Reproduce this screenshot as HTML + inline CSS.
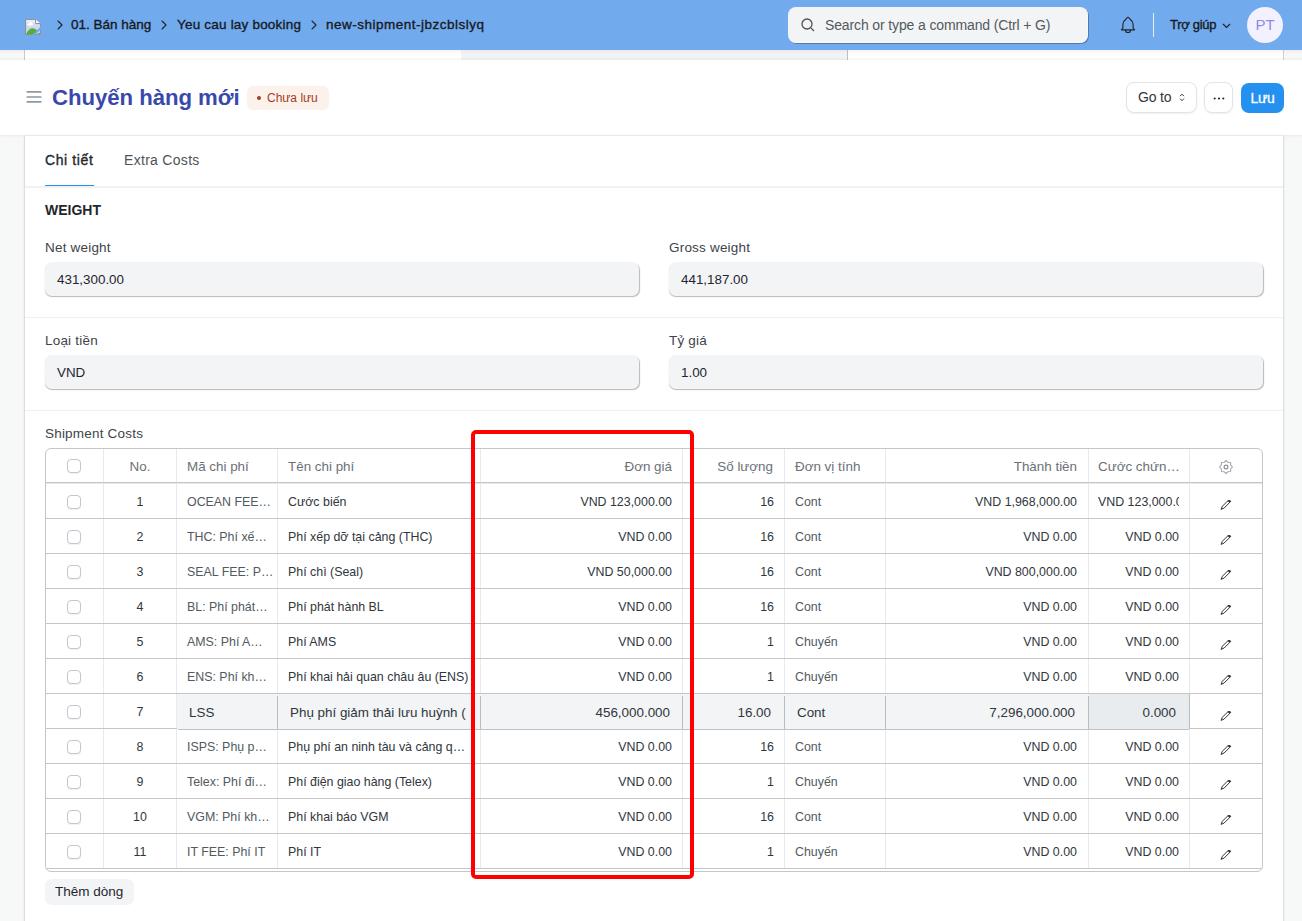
<!DOCTYPE html>
<html><head><meta charset="utf-8">
<style>
*{box-sizing:border-box;margin:0;padding:0}
html,body{width:1302px;height:921px;overflow:hidden}
body{font-family:"Liberation Sans",sans-serif;background:#f7f8f8;position:relative;color:#1f272e}
.abs{position:absolute}
#nav{left:0;top:0;width:1302px;height:50px;background:#72aaee}
.crumb{position:absolute;top:16px;font-size:13.5px;color:#171a1d;white-space:nowrap;line-height:18px;-webkit-text-stroke:.35px #171a1d}
.chev{position:absolute;top:20px}
#strip{left:0;top:50px;width:1302px;height:10px;background:#f7f8f8}
#head{left:0;top:60px;width:1302px;height:76px;background:#fff;border-bottom:1px solid #ededed;box-shadow:0 1px 2px rgba(0,0,0,.03)}
#card{left:24px;top:136px;width:1260px;height:800px;background:#fff;border-left:1px solid #dedede;border-right:1px solid #dedede;box-shadow:0 0 3px rgba(25,39,52,.06)}
.lbl{position:absolute;font-size:13px;color:#3d4449;white-space:nowrap;line-height:16px}
.inp{position:absolute;height:34px;background:#f3f4f6;border-radius:7px;box-shadow:0.5px 1px 1px rgba(0,0,0,.28);font-size:13.4px;color:#1f272e;padding-left:12px;line-height:35px}
.gt{position:absolute;font-size:12.4px;line-height:18px;white-space:nowrap}
.hr{position:absolute;left:25px;width:1258px;height:1px;background:#f0f0f0}
</style></head><body>
<div id="nav" class="abs">
  <svg class="abs" style="left:25px;top:19px" width="16" height="16" viewBox="0 0 16 16"><defs><linearGradient id="pg" x1="0" y1="0" x2="0" y2="1"><stop offset="0" stop-color="#ffffff"/><stop offset=".18" stop-color="#dde7f8"/><stop offset=".6" stop-color="#c9d7ef"/><stop offset="1" stop-color="#dae4f5"/></linearGradient></defs><path d="M.6 .6H10.6L15.4 5.2V15.4H.6z" fill="url(#pg)" stroke="#8e8c88" stroke-width="1"/><path d="M10.6 .6V4.6H15.4" fill="#fff" stroke="#8e8c88" stroke-width="1"/><ellipse cx="5.2" cy="5.4" rx="3" ry="1" fill="#fff"/><circle cx="5.6" cy="4.5" r="1.5" fill="#fff"/><path d="M1 15.2Q4 8.5 9 9.4Q11.5 10 12.6 12.4L11 15.2z" fill="#58ad38"/><path d="M13.2 14.2Q14.2 13.3 15.1 14.2V15.1H13z" fill="#58ad38"/><path d="M6.8 16.2L9.9 16.2L16.2 10.2L16.2 7.4z" fill="#72aaee"/></svg>
  <svg class="chev" style="left:57px" width="6" height="10" viewBox="0 0 6 10"><path d="M1 1l4 4-4 4" fill="none" stroke="#22282c" stroke-width="1.15" stroke-linecap="round" stroke-linejoin="round"/></svg>
  <div class="crumb" style="left:71px;letter-spacing:0px">01. Bán hàng</div>
  <svg class="chev" style="left:161px" width="6" height="10" viewBox="0 0 6 10"><path d="M1 1l4 4-4 4" fill="none" stroke="#22282c" stroke-width="1.15" stroke-linecap="round" stroke-linejoin="round"/></svg>
  <div class="crumb" style="left:177px;letter-spacing:.2px">Yeu cau lay booking</div>
  <svg class="chev" style="left:311px" width="6" height="10" viewBox="0 0 6 10"><path d="M1 1l4 4-4 4" fill="none" stroke="#22282c" stroke-width="1.15" stroke-linecap="round" stroke-linejoin="round"/></svg>
  <div class="crumb" style="left:326px;letter-spacing:.5px">new-shipment-jbzcblslyq</div>
  <div class="abs" style="left:788px;top:7px;width:300px;height:36px;background:#f3f4f6;border-radius:8px;box-shadow:inset -1px -1px 0 rgba(255,250,240,.6),1px 1px .5px rgba(30,50,90,.4)">
    <svg class="abs" style="left:13px;top:11px" width="14" height="14" viewBox="0 0 14 14"><circle cx="6" cy="6" r="5" fill="none" stroke="#4c5257" stroke-width="1.3"/><path d="M10 10l3 3" stroke="#4c5257" stroke-width="1.3"/></svg>
    <div class="abs" style="left:37px;top:10px;font-size:14px;letter-spacing:-.13px;color:#525a60;white-space:nowrap;line-height:16px">Search or type a command (Ctrl + G)</div>
  </div>
  <svg class="abs" style="left:1118px;top:14px" width="20" height="22" viewBox="0 0 20 22"><path d="M3.4 15.8L4.9 14V10.2C4.9 7.8 6.4 6.3 7.9 5.2L9 3.8C9.5 3.1 10.5 3.1 11 3.8L12.1 5.2C13.6 6.3 15.1 7.8 15.1 10.2V14L16.6 15.8Z" fill="none" stroke="#1f2529" stroke-width="1.15" stroke-linejoin="round"/><path d="M7.5 15.9A2.5 2.6 0 0 0 12.5 15.9" fill="none" stroke="#1f2529" stroke-width="1.15"/></svg>
  <div class="abs" style="left:1153px;top:13px;width:1px;height:24px;background:#e6eefa"></div>
  <div class="crumb" style="left:1170px;top:16px;font-size:13px;letter-spacing:-.3px">Trợ giúp</div>
  <svg class="abs" style="left:1222px;top:23px" width="9" height="6" viewBox="0 0 9 6"><path d="M1 1l3.5 3.5L8 1" fill="none" stroke="#1c2329" stroke-width="1.2"/></svg>
  <div class="abs" style="left:1247px;top:7px;width:36px;height:36px;border-radius:50%;background:#f2f1fd;color:#8d8be5;font-size:15px;text-align:center;line-height:36px">PT</div>
</div>
<div id="strip" class="abs">
  <div class="abs" style="left:24px;top:0;width:1260px;height:10px;background:#fff;border-left:1px solid #c9c9c9;border-right:1px solid #d0d0d0"></div>
  <div class="abs" style="left:461px;top:0;width:387px;height:10px;background:#f2f3f4;border-right:1px solid #c0c0c0"></div>
  <div class="abs" style="left:0;top:0;width:1302px;height:10px;background:linear-gradient(rgba(0,0,0,.04),rgba(0,0,0,0) 40%,rgba(0,0,0,0) 70%,rgba(0,0,0,.04))"></div>
</div>
<div id="head" class="abs">
  <svg class="abs" style="left:25px;top:29px" width="18" height="16" viewBox="0 0 18 16"><path d="M2.3 2.9h13.5M2.3 8h13.5M2.3 12.9h13.5" stroke="#8f99a2" stroke-width="1.7" stroke-linecap="round"/></svg>
  <div class="abs" style="left:52px;top:25px;font-size:22.2px;letter-spacing:-.05px;font-weight:bold;color:#3949ab;white-space:nowrap;line-height:26px">Chuyến hàng mới</div>
  <div class="abs" style="left:247px;top:26px;width:82px;height:24px;border-radius:6px;background:#fdf1ec;color:#a1401b;font-size:12px;line-height:24px;padding-left:10px;white-space:nowrap"><span style="display:inline-block;width:4px;height:4px;border-radius:50%;background:#a1401b;vertical-align:middle;margin-right:6px;position:relative;top:-1px"></span>Chưa lưu</div>
  <div class="abs" style="left:1126px;top:22px;width:71px;height:31px;border-radius:8px;background:#fff;border:1px solid #e4e4e4;box-shadow:0 1px 2px rgba(0,0,0,.06);font-size:14px;color:#30373c;line-height:29px;padding-left:11px;letter-spacing:-.2px">Go to<svg class="abs" style="left:52px;top:9px" width="6" height="11" viewBox="0 0 6 11"><path d="M1.3 3.9l1.7-1.7 1.7 1.7M1.3 6.9l1.7 1.7 1.7-1.7" fill="none" stroke="#30373c" stroke-width="1" stroke-linecap="round" stroke-linejoin="round"/></svg></div>
  <div class="abs" style="left:1204px;top:22px;width:29px;height:31px;border-radius:8px;background:#fff;border:1px solid #e4e4e4;box-shadow:0 1px 2px rgba(0,0,0,.06)"><svg class="abs" style="left:8px;top:14px" width="12" height="3" viewBox="0 0 12 3"><circle cx="1.7" cy="1.5" r="1.05" fill="#1f272e"/><circle cx="6" cy="1.5" r="1.05" fill="#1f272e"/><circle cx="10.3" cy="1.5" r="1.05" fill="#1f272e"/></svg></div>
  <div class="abs" style="left:1241px;top:23px;width:43px;height:30px;border-radius:8px;background:#2490ef;color:#fff;font-size:14px;-webkit-text-stroke:.3px #fff;line-height:30px;text-align:center;letter-spacing:-.3px">Lưu</div>
</div>
<div id="card" class="abs"></div>
<div class="abs" style="left:45px;top:151px;font-size:14px;-webkit-text-stroke:.35px #1f272e;letter-spacing:.6px;color:#1f272e;white-space:nowrap;line-height:18px">Chi tiết</div>
<div class="abs" style="left:124px;top:151px;font-size:14px;letter-spacing:.3px;color:#4d5459;white-space:nowrap;line-height:18px">Extra Costs</div>
<div class="abs" style="left:45px;top:185px;width:49px;height:1px;background:#2490ef"></div>
<div class="hr" style="top:186px;height:2px;background:#f1f1f1"></div>
<div class="abs" style="left:45px;top:202px;font-size:14px;font-weight:bold;color:#1f272e;white-space:nowrap;line-height:16px">WEIGHT</div>
<div class="lbl" style="left:45px;top:240px;font-size:13.5px;letter-spacing:.2px">Net weight</div>
<div class="inp" style="left:45px;top:262px;width:594px">431,300.00</div>
<div class="lbl" style="left:669px;top:240px;font-size:13.5px;letter-spacing:.2px">Gross weight</div>
<div class="inp" style="left:669px;top:262px;width:594px">441,187.00</div>
<div class="hr" style="top:317px"></div>
<div class="lbl" style="left:45px;top:333px;font-size:13.5px;letter-spacing:.2px">Loại tiền</div>
<div class="inp" style="left:45px;top:355px;width:594px">VND</div>
<div class="lbl" style="left:669px;top:333px;font-size:13.5px;letter-spacing:.2px">Tỷ giá</div>
<div class="inp" style="left:669px;top:355px;width:594px">1.00</div>
<div class="hr" style="top:410px"></div>
<div class="lbl" style="left:45px;top:426px;font-size:13.5px;letter-spacing:.2px">Shipment Costs</div>
<!--GRID-->
<div class="abs" style="left:45px;top:448px;width:1218px;height:424px;border:1px solid #c6c6c6;border-radius:6px;background:#fff"></div>
<div class="abs" style="left:103px;top:449px;width:1px;height:420px;background:#e8ebee"></div>
<div class="abs" style="left:176px;top:449px;width:1px;height:420px;background:#e8ebee"></div>
<div class="abs" style="left:277px;top:449px;width:1px;height:420px;background:#e8ebee"></div>
<div class="abs" style="left:480px;top:449px;width:1px;height:420px;background:#e8ebee"></div>
<div class="abs" style="left:682px;top:449px;width:1px;height:420px;background:#e8ebee"></div>
<div class="abs" style="left:784px;top:449px;width:1px;height:420px;background:#e8ebee"></div>
<div class="abs" style="left:885px;top:449px;width:1px;height:420px;background:#e8ebee"></div>
<div class="abs" style="left:1088px;top:449px;width:1px;height:420px;background:#e8ebee"></div>
<div class="abs" style="left:1189px;top:449px;width:1px;height:420px;background:#e8ebee"></div>
<div class="abs" style="left:46px;top:482px;width:1216px;height:1px;background:#c6c6c6"></div>
<div class="abs" style="left:46px;top:483px;width:1216px;height:1px;background:#e5e9ec"></div>
<div class="abs" style="left:46px;top:518px;width:1216px;height:1px;background:#c6c6c6"></div>
<div class="abs" style="left:46px;top:553px;width:1216px;height:1px;background:#c6c6c6"></div>
<div class="abs" style="left:46px;top:588px;width:1216px;height:1px;background:#c6c6c6"></div>
<div class="abs" style="left:46px;top:623px;width:1216px;height:1px;background:#c6c6c6"></div>
<div class="abs" style="left:46px;top:658px;width:1216px;height:1px;background:#c6c6c6"></div>
<div class="abs" style="left:46px;top:693px;width:1216px;height:1px;background:#c6c6c6"></div>
<div class="abs" style="left:46px;top:728px;width:1216px;height:1px;background:#c6c6c6"></div>
<div class="abs" style="left:46px;top:763px;width:1216px;height:1px;background:#c6c6c6"></div>
<div class="abs" style="left:46px;top:798px;width:1216px;height:1px;background:#c6c6c6"></div>
<div class="abs" style="left:46px;top:833px;width:1216px;height:1px;background:#c6c6c6"></div>
<div class="abs" style="left:46px;top:868px;width:1216px;height:1px;background:#c6c6c6"></div>
<div class="abs" style="left:67px;top:459px;width:14px;height:14px;border:1px solid #c2c8cd;border-radius:4px;background:#fff;box-shadow:0 1px 1px rgba(0,0,0,.06)"></div>
<div class="gt" style="left:104px;top:458px;width:72px;text-align:center;color:#6b7177;font-size:13.4px;">No.</div>
<div class="gt" style="left:187px;top:458px;color:#6b7177;font-size:13.4px;">Mã chi phí</div>
<div class="gt" style="left:288px;top:458px;color:#6b7177;font-size:13.4px;">Tên chi phí</div>
<div class="gt" style="left:492px;top:458px;width:180px;text-align:right;color:#6b7177;font-size:13.4px;">Đơn giá</div>
<div class="gt" style="left:693px;top:458px;width:80px;text-align:right;color:#6b7177;font-size:13.4px;">Số lượng</div>
<div class="gt" style="left:795px;top:458px;color:#6b7177;font-size:13.4px;">Đơn vị tính</div>
<div class="gt" style="left:897px;top:458px;width:180px;text-align:right;color:#6b7177;font-size:13.4px;">Thành tiền</div>
<div class="gt" style="left:1098px;top:458px;color:#6b7177;font-size:13.4px;">Cước chứn…</div>
<svg class="abs" style="left:1219px;top:460px" width="14" height="14" viewBox="0 0 14 14"><path d="M7.00 0.50 L8.95 2.29 L11.60 2.40 L11.71 5.05 L13.50 7.00 L11.71 8.95 L11.60 11.60 L8.95 11.71 L7.00 13.50 L5.05 11.71 L2.40 11.60 L2.29 8.95 L0.50 7.00 L2.29 5.05 L2.40 2.40 L5.05 2.29Z" fill="none" stroke="#a0a6ac" stroke-width="1.05" stroke-linejoin="round"/><circle cx="7" cy="7" r="1.9" fill="none" stroke="#8d939a" stroke-width="1.2"/></svg>
<div class="abs" style="left:67px;top:495px;width:14px;height:14px;border:1px solid #c2c8cd;border-radius:4px;background:#fff;box-shadow:0 1px 1px rgba(0,0,0,.06)"></div>
<div class="gt" style="left:104px;top:493px;width:72px;text-align:center;color:#30363c;">1</div>
<div class="gt" style="left:187px;top:493px;color:#525a60;">OCEAN FEE…</div>
<div class="gt" style="left:288px;top:493px;color:#30363c;">Cước biến</div>
<div class="gt" style="left:492px;top:493px;width:180px;text-align:right;color:#30363c;">VND 123,000.00</div>
<div class="gt" style="left:694px;top:493px;width:80px;text-align:right;color:#30363c;">16</div>
<div class="gt" style="left:795px;top:493px;color:#525a60;">Cont</div>
<div class="gt" style="left:897px;top:493px;width:180px;text-align:right;color:#30363c;">VND 1,968,000.00</div>
<div class="abs" style="left:1098px;top:493px;width:81px;height:18px;overflow:hidden"><div class="gt" style="left:0;top:0;color:#30363c">VND 123,000.00</div></div>
<svg class="abs" style="left:1220px;top:500px" width="12" height="12" viewBox="0 1 12 12"><path d="M1.00 10.40 L2.38 7.25 L9.03 0.61 L10.79 2.37 L4.15 9.02Z" fill="none" stroke="#2e3439" stroke-width="1" stroke-linejoin="round"/><path d="M7.61 2.02 L9.03 0.61 L10.79 2.37 L9.38 3.79Z" fill="#2e3439"/></svg>
<div class="abs" style="left:67px;top:530px;width:14px;height:14px;border:1px solid #c2c8cd;border-radius:4px;background:#fff;box-shadow:0 1px 1px rgba(0,0,0,.06)"></div>
<div class="gt" style="left:104px;top:528px;width:72px;text-align:center;color:#30363c;">2</div>
<div class="gt" style="left:187px;top:528px;color:#525a60;">THC: Phí xế…</div>
<div class="gt" style="left:288px;top:528px;color:#30363c;">Phí xếp dỡ tại cảng (THC)</div>
<div class="gt" style="left:492px;top:528px;width:180px;text-align:right;color:#30363c;">VND 0.00</div>
<div class="gt" style="left:694px;top:528px;width:80px;text-align:right;color:#30363c;">16</div>
<div class="gt" style="left:795px;top:528px;color:#525a60;">Cont</div>
<div class="gt" style="left:897px;top:528px;width:180px;text-align:right;color:#30363c;">VND 0.00</div>
<div class="gt" style="left:1099px;top:528px;width:80px;text-align:right;color:#30363c;">VND 0.00</div>
<svg class="abs" style="left:1220px;top:535px" width="12" height="12" viewBox="0 1 12 12"><path d="M1.00 10.40 L2.38 7.25 L9.03 0.61 L10.79 2.37 L4.15 9.02Z" fill="none" stroke="#2e3439" stroke-width="1" stroke-linejoin="round"/><path d="M7.61 2.02 L9.03 0.61 L10.79 2.37 L9.38 3.79Z" fill="#2e3439"/></svg>
<div class="abs" style="left:67px;top:565px;width:14px;height:14px;border:1px solid #c2c8cd;border-radius:4px;background:#fff;box-shadow:0 1px 1px rgba(0,0,0,.06)"></div>
<div class="gt" style="left:104px;top:563px;width:72px;text-align:center;color:#30363c;">3</div>
<div class="gt" style="left:187px;top:563px;color:#525a60;">SEAL FEE: P…</div>
<div class="gt" style="left:288px;top:563px;color:#30363c;">Phí chì (Seal)</div>
<div class="gt" style="left:492px;top:563px;width:180px;text-align:right;color:#30363c;">VND 50,000.00</div>
<div class="gt" style="left:694px;top:563px;width:80px;text-align:right;color:#30363c;">16</div>
<div class="gt" style="left:795px;top:563px;color:#525a60;">Cont</div>
<div class="gt" style="left:897px;top:563px;width:180px;text-align:right;color:#30363c;">VND 800,000.00</div>
<div class="gt" style="left:1099px;top:563px;width:80px;text-align:right;color:#30363c;">VND 0.00</div>
<svg class="abs" style="left:1220px;top:570px" width="12" height="12" viewBox="0 1 12 12"><path d="M1.00 10.40 L2.38 7.25 L9.03 0.61 L10.79 2.37 L4.15 9.02Z" fill="none" stroke="#2e3439" stroke-width="1" stroke-linejoin="round"/><path d="M7.61 2.02 L9.03 0.61 L10.79 2.37 L9.38 3.79Z" fill="#2e3439"/></svg>
<div class="abs" style="left:67px;top:600px;width:14px;height:14px;border:1px solid #c2c8cd;border-radius:4px;background:#fff;box-shadow:0 1px 1px rgba(0,0,0,.06)"></div>
<div class="gt" style="left:104px;top:598px;width:72px;text-align:center;color:#30363c;">4</div>
<div class="gt" style="left:187px;top:598px;color:#525a60;">BL: Phí phát…</div>
<div class="gt" style="left:288px;top:598px;color:#30363c;">Phí phát hành BL</div>
<div class="gt" style="left:492px;top:598px;width:180px;text-align:right;color:#30363c;">VND 0.00</div>
<div class="gt" style="left:694px;top:598px;width:80px;text-align:right;color:#30363c;">16</div>
<div class="gt" style="left:795px;top:598px;color:#525a60;">Cont</div>
<div class="gt" style="left:897px;top:598px;width:180px;text-align:right;color:#30363c;">VND 0.00</div>
<div class="gt" style="left:1099px;top:598px;width:80px;text-align:right;color:#30363c;">VND 0.00</div>
<svg class="abs" style="left:1220px;top:605px" width="12" height="12" viewBox="0 1 12 12"><path d="M1.00 10.40 L2.38 7.25 L9.03 0.61 L10.79 2.37 L4.15 9.02Z" fill="none" stroke="#2e3439" stroke-width="1" stroke-linejoin="round"/><path d="M7.61 2.02 L9.03 0.61 L10.79 2.37 L9.38 3.79Z" fill="#2e3439"/></svg>
<div class="abs" style="left:67px;top:635px;width:14px;height:14px;border:1px solid #c2c8cd;border-radius:4px;background:#fff;box-shadow:0 1px 1px rgba(0,0,0,.06)"></div>
<div class="gt" style="left:104px;top:633px;width:72px;text-align:center;color:#30363c;">5</div>
<div class="gt" style="left:187px;top:633px;color:#525a60;">AMS: Phí A…</div>
<div class="gt" style="left:288px;top:633px;color:#30363c;">Phí AMS</div>
<div class="gt" style="left:492px;top:633px;width:180px;text-align:right;color:#30363c;">VND 0.00</div>
<div class="gt" style="left:694px;top:633px;width:80px;text-align:right;color:#30363c;">1</div>
<div class="gt" style="left:795px;top:633px;color:#525a60;">Chuyến</div>
<div class="gt" style="left:897px;top:633px;width:180px;text-align:right;color:#30363c;">VND 0.00</div>
<div class="gt" style="left:1099px;top:633px;width:80px;text-align:right;color:#30363c;">VND 0.00</div>
<svg class="abs" style="left:1220px;top:640px" width="12" height="12" viewBox="0 1 12 12"><path d="M1.00 10.40 L2.38 7.25 L9.03 0.61 L10.79 2.37 L4.15 9.02Z" fill="none" stroke="#2e3439" stroke-width="1" stroke-linejoin="round"/><path d="M7.61 2.02 L9.03 0.61 L10.79 2.37 L9.38 3.79Z" fill="#2e3439"/></svg>
<div class="abs" style="left:67px;top:670px;width:14px;height:14px;border:1px solid #c2c8cd;border-radius:4px;background:#fff;box-shadow:0 1px 1px rgba(0,0,0,.06)"></div>
<div class="gt" style="left:104px;top:668px;width:72px;text-align:center;color:#30363c;">6</div>
<div class="gt" style="left:187px;top:668px;color:#525a60;">ENS: Phí kh…</div>
<div class="gt" style="left:288px;top:668px;color:#30363c;">Phí khai hải quan châu âu (ENS)</div>
<div class="gt" style="left:492px;top:668px;width:180px;text-align:right;color:#30363c;">VND 0.00</div>
<div class="gt" style="left:694px;top:668px;width:80px;text-align:right;color:#30363c;">1</div>
<div class="gt" style="left:795px;top:668px;color:#525a60;">Chuyến</div>
<div class="gt" style="left:897px;top:668px;width:180px;text-align:right;color:#30363c;">VND 0.00</div>
<div class="gt" style="left:1099px;top:668px;width:80px;text-align:right;color:#30363c;">VND 0.00</div>
<svg class="abs" style="left:1220px;top:675px" width="12" height="12" viewBox="0 1 12 12"><path d="M1.00 10.40 L2.38 7.25 L9.03 0.61 L10.79 2.37 L4.15 9.02Z" fill="none" stroke="#2e3439" stroke-width="1" stroke-linejoin="round"/><path d="M7.61 2.02 L9.03 0.61 L10.79 2.37 L9.38 3.79Z" fill="#2e3439"/></svg>
<div class="abs" style="left:67px;top:705px;width:14px;height:14px;border:1px solid #c2c8cd;border-radius:4px;background:#fff;box-shadow:0 1px 1px rgba(0,0,0,.06)"></div>
<div class="gt" style="left:104px;top:703px;width:72px;text-align:center;color:#30363c;">7</div>
<div class="abs" style="left:177px;top:694px;width:1012px;height:35px;background:#f3f4f6"></div>
<div class="abs" style="left:277px;top:696px;width:1px;height:33px;background:#b9bdc1"></div>
<div class="abs" style="left:480px;top:696px;width:1px;height:33px;background:#b9bdc1"></div>
<div class="abs" style="left:682px;top:696px;width:1px;height:33px;background:#b9bdc1"></div>
<div class="abs" style="left:784px;top:696px;width:1px;height:33px;background:#b9bdc1"></div>
<div class="abs" style="left:885px;top:696px;width:1px;height:33px;background:#b9bdc1"></div>
<div class="abs" style="left:1088px;top:696px;width:1px;height:33px;background:#b9bdc1"></div>
<div class="abs" style="left:1089px;top:694px;width:101px;height:35px;background:#e9ecef;border-right:1px solid #b9bdc1"></div>
<div class="abs" style="left:178px;top:729px;width:1011px;height:1px;background:#c0c3c6"></div>
<div class="gt" style="left:189px;top:704px;color:#30363c;font-size:13.4px;">LSS</div>
<div class="abs" style="left:290px;top:704px;width:176px;height:18px;overflow:hidden"><div class="gt" style="left:0;top:0;color:#30363c;font-size:13.4px">Phụ phí giảm thải lưu huỳnh (LSS)</div></div>
<div class="gt" style="left:490px;top:704px;width:180px;text-align:right;color:#30363c;font-size:13.4px;">456,000.000</div>
<div class="gt" style="left:691px;top:704px;width:80px;text-align:right;color:#30363c;font-size:13.4px;">16.00</div>
<div class="gt" style="left:797px;top:704px;color:#30363c;font-size:13.4px;">Cont</div>
<div class="gt" style="left:895px;top:704px;width:180px;text-align:right;color:#30363c;font-size:13.4px;">7,296,000.000</div>
<div class="gt" style="left:1096px;top:704px;width:80px;text-align:right;color:#30363c;font-size:13.4px;">0.000</div>
<svg class="abs" style="left:1220px;top:711px" width="12" height="12" viewBox="0 1 12 12"><path d="M1.00 10.40 L2.38 7.25 L9.03 0.61 L10.79 2.37 L4.15 9.02Z" fill="none" stroke="#2e3439" stroke-width="1" stroke-linejoin="round"/><path d="M7.61 2.02 L9.03 0.61 L10.79 2.37 L9.38 3.79Z" fill="#2e3439"/></svg>
<div class="abs" style="left:67px;top:740px;width:14px;height:14px;border:1px solid #c2c8cd;border-radius:4px;background:#fff;box-shadow:0 1px 1px rgba(0,0,0,.06)"></div>
<div class="gt" style="left:104px;top:738px;width:72px;text-align:center;color:#30363c;">8</div>
<div class="gt" style="left:187px;top:738px;color:#525a60;">ISPS: Phụ p…</div>
<div class="gt" style="left:288px;top:738px;color:#30363c;">Phụ phí an ninh tàu và cảng q…</div>
<div class="gt" style="left:492px;top:738px;width:180px;text-align:right;color:#30363c;">VND 0.00</div>
<div class="gt" style="left:694px;top:738px;width:80px;text-align:right;color:#30363c;">16</div>
<div class="gt" style="left:795px;top:738px;color:#525a60;">Cont</div>
<div class="gt" style="left:897px;top:738px;width:180px;text-align:right;color:#30363c;">VND 0.00</div>
<div class="gt" style="left:1099px;top:738px;width:80px;text-align:right;color:#30363c;">VND 0.00</div>
<svg class="abs" style="left:1220px;top:745px" width="12" height="12" viewBox="0 1 12 12"><path d="M1.00 10.40 L2.38 7.25 L9.03 0.61 L10.79 2.37 L4.15 9.02Z" fill="none" stroke="#2e3439" stroke-width="1" stroke-linejoin="round"/><path d="M7.61 2.02 L9.03 0.61 L10.79 2.37 L9.38 3.79Z" fill="#2e3439"/></svg>
<div class="abs" style="left:67px;top:775px;width:14px;height:14px;border:1px solid #c2c8cd;border-radius:4px;background:#fff;box-shadow:0 1px 1px rgba(0,0,0,.06)"></div>
<div class="gt" style="left:104px;top:773px;width:72px;text-align:center;color:#30363c;">9</div>
<div class="gt" style="left:187px;top:773px;color:#525a60;">Telex: Phí đi…</div>
<div class="gt" style="left:288px;top:773px;color:#30363c;">Phí điện giao hàng (Telex)</div>
<div class="gt" style="left:492px;top:773px;width:180px;text-align:right;color:#30363c;">VND 0.00</div>
<div class="gt" style="left:694px;top:773px;width:80px;text-align:right;color:#30363c;">1</div>
<div class="gt" style="left:795px;top:773px;color:#525a60;">Chuyến</div>
<div class="gt" style="left:897px;top:773px;width:180px;text-align:right;color:#30363c;">VND 0.00</div>
<div class="gt" style="left:1099px;top:773px;width:80px;text-align:right;color:#30363c;">VND 0.00</div>
<svg class="abs" style="left:1220px;top:780px" width="12" height="12" viewBox="0 1 12 12"><path d="M1.00 10.40 L2.38 7.25 L9.03 0.61 L10.79 2.37 L4.15 9.02Z" fill="none" stroke="#2e3439" stroke-width="1" stroke-linejoin="round"/><path d="M7.61 2.02 L9.03 0.61 L10.79 2.37 L9.38 3.79Z" fill="#2e3439"/></svg>
<div class="abs" style="left:67px;top:810px;width:14px;height:14px;border:1px solid #c2c8cd;border-radius:4px;background:#fff;box-shadow:0 1px 1px rgba(0,0,0,.06)"></div>
<div class="gt" style="left:104px;top:808px;width:72px;text-align:center;color:#30363c;">10</div>
<div class="gt" style="left:187px;top:808px;color:#525a60;">VGM: Phí kh…</div>
<div class="gt" style="left:288px;top:808px;color:#30363c;">Phí khai báo VGM</div>
<div class="gt" style="left:492px;top:808px;width:180px;text-align:right;color:#30363c;">VND 0.00</div>
<div class="gt" style="left:694px;top:808px;width:80px;text-align:right;color:#30363c;">16</div>
<div class="gt" style="left:795px;top:808px;color:#525a60;">Cont</div>
<div class="gt" style="left:897px;top:808px;width:180px;text-align:right;color:#30363c;">VND 0.00</div>
<div class="gt" style="left:1099px;top:808px;width:80px;text-align:right;color:#30363c;">VND 0.00</div>
<svg class="abs" style="left:1220px;top:815px" width="12" height="12" viewBox="0 1 12 12"><path d="M1.00 10.40 L2.38 7.25 L9.03 0.61 L10.79 2.37 L4.15 9.02Z" fill="none" stroke="#2e3439" stroke-width="1" stroke-linejoin="round"/><path d="M7.61 2.02 L9.03 0.61 L10.79 2.37 L9.38 3.79Z" fill="#2e3439"/></svg>
<div class="abs" style="left:67px;top:845px;width:14px;height:14px;border:1px solid #c2c8cd;border-radius:4px;background:#fff;box-shadow:0 1px 1px rgba(0,0,0,.06)"></div>
<div class="gt" style="left:104px;top:843px;width:72px;text-align:center;color:#30363c;">11</div>
<div class="gt" style="left:187px;top:843px;color:#525a60;">IT FEE: Phí IT</div>
<div class="gt" style="left:288px;top:843px;color:#30363c;">Phí IT</div>
<div class="gt" style="left:492px;top:843px;width:180px;text-align:right;color:#30363c;">VND 0.00</div>
<div class="gt" style="left:694px;top:843px;width:80px;text-align:right;color:#30363c;">1</div>
<div class="gt" style="left:795px;top:843px;color:#525a60;">Chuyến</div>
<div class="gt" style="left:897px;top:843px;width:180px;text-align:right;color:#30363c;">VND 0.00</div>
<div class="gt" style="left:1099px;top:843px;width:80px;text-align:right;color:#30363c;">VND 0.00</div>
<svg class="abs" style="left:1220px;top:850px" width="12" height="12" viewBox="0 1 12 12"><path d="M1.00 10.40 L2.38 7.25 L9.03 0.61 L10.79 2.37 L4.15 9.02Z" fill="none" stroke="#2e3439" stroke-width="1" stroke-linejoin="round"/><path d="M7.61 2.02 L9.03 0.61 L10.79 2.37 L9.38 3.79Z" fill="#2e3439"/></svg>
<!--/GRID-->
<div class="abs" style="left:45px;top:879px;width:89px;height:26px;border-radius:7px;background:#f3f4f6;font-size:13.5px;color:#1f272e;line-height:26px;padding-left:10px;white-space:nowrap">Thêm dòng</div>
<div class="abs" style="left:471px;top:430px;width:223px;height:449px;border:4px solid #ff0000;border-radius:5px"></div>

</body></html>
